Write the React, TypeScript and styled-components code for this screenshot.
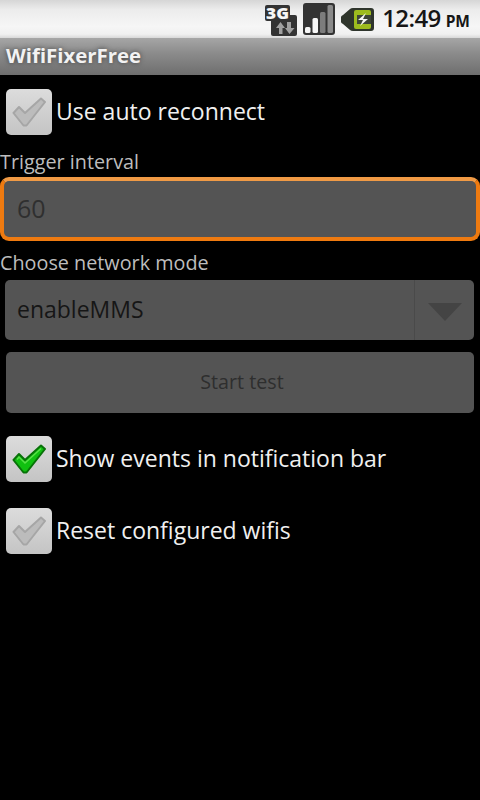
import React from 'react';
import styled, { createGlobalStyle } from 'styled-components';

const GlobalStyle = createGlobalStyle`
  html, body {
    margin: 0;
    padding: 0;
    background: #000;
  }
  * {
    box-sizing: border-box;
  }
`;

const Screen = styled.div`
  width: 480px;
  height: 800px;
  background: #000;
  overflow: hidden;
  font-family: 'Open Sans', 'Noto Sans', sans-serif;
`;

const StatusBar = styled.div`
  height: 38px;
  display: flex;
  justify-content: flex-end;
  align-items: center;
  background: linear-gradient(#d6d6d6 0%, #ececec 25%, #f6f6f6 70%, #f0f0f0 90%, #d8d8d8 100%);
  padding-right: 10px;
`;

const StatusIcon = styled.svg<{ $gap: number; $lift?: number }>`
  display: block;
  margin-right: ${(props) => props.$gap}px;
  margin-bottom: ${(props) => props.$lift || 0}px;
`;

const Clock = styled.div`
  color: #161616;
  font-size: 24px;
  font-weight: 600;
  line-height: 38px;
  letter-spacing: -0.6px;
  white-space: nowrap;
  & small {
    font-size: 15.5px;
    font-weight: 700;
    margin-left: 5px;
    letter-spacing: 0;
  }
`;

const TitleBar = styled.div`
  height: 37px;
  display: flex;
  align-items: center;
  padding: 0 0 4px 6px;
  background: linear-gradient(#a6a6a6 0%, #8c8c8c 40%, #6e6e6e 100%);
  color: #f2f2f2;
  font-size: 20.4px;
  font-weight: 700;
  text-shadow: 0 0 5px #3c3c3c;
`;

const CheckRow = styled.div<{ $top: number; $bottom: number }>`
  display: flex;
  align-items: center;
  padding: ${(props) => props.$top}px 0 ${(props) => props.$bottom}px 6px;
`;

const CheckBox = styled.div`
  width: 46px;
  height: 46px;
  border-radius: 5px;
  display: flex;
  align-items: center;
  justify-content: center;
  background: linear-gradient(#dcdcdc, #c4c4c4);
  & svg {
    display: block;
  }
`;

const CheckLabel = styled.div`
  margin: 0 0 3px 4px;
  color: #f0f0f0;
  font-size: 23px;
  line-height: 32px;
  white-space: nowrap;
`;

const FieldLabel = styled.div<{ $top: number }>`
  margin-top: ${(props) => props.$top}px;
  height: 28px;
  line-height: 28px;
  color: #bdbdbd;
  font-size: 19.8px;
  white-space: nowrap;
`;

const TextField = styled.div`
  margin-top: 1px;
  height: 64px;
  display: flex;
  align-items: center;
  padding: 0 0 2px 13px;
  border: 4px solid #ee7a10;
  border-top-color: #f09a45;
  border-radius: 9px;
  background: #545454;
  color: #2f2f2f;
  font-size: 25px;
`;

const Select = styled.div`
  margin: 3px 6px 0 5px;
  height: 60px;
  display: flex;
  align-items: center;
  justify-content: space-between;
  border-radius: 5px;
  background: #545454;
`;

const SelectValue = styled.div`
  padding: 0 0 3px 12px;
  color: #161616;
  font-size: 23px;
`;

const SelectArrow = styled.div`
  width: 60px;
  height: 60px;
  display: flex;
  align-items: center;
  justify-content: center;
  border-left: 1px solid #4a4a4a;
  &::after {
    content: '';
    width: 0;
    height: 0;
    margin-top: 4px;
    border-left: 17px solid transparent;
    border-right: 17px solid transparent;
    border-top: 18px solid #444;
  }
`;

const TestButton = styled.div`
  margin: 12px 6px 0 6px;
  height: 61px;
  padding: 0 0 3px 4px;
  display: flex;
  align-items: center;
  justify-content: center;
  border-radius: 5px;
  background: #545454;
  color: #2e2e2e;
  font-size: 19.7px;
`;

function Check({ on }: { on?: boolean }) {
  return (
    <svg width="34" height="30" viewBox="0 0 34 30">
      <path
        d="M1.5 16 L7 10 L13 16 L29 1.5 L33 5 L14.5 28.5 L11.5 28.5 Z"
        fill={on ? '#10c010' : '#bcbcbc'}
        stroke={on ? '#087208' : '#a6a6a6'}
        strokeWidth="2"
        strokeLinejoin="round"
      />
      {on && <path d="M5 15.5 L7 13 L13 19 L29 4.5" fill="none" stroke="#58e048" strokeWidth="1.5" />}
    </svg>
  );
}

function NetworkIcon() {
  return (
    <StatusIcon $gap={6} $lift={2} width="32" height="35" viewBox="0 -4 32 35">
      <rect x="0" y="0" width="25" height="16" rx="2" fill="#333" />
      <rect x="6" y="10" width="26" height="21" rx="2" fill="#333" />
      <text
        x="1"
        y="13.5"
        fontFamily="Open Sans, sans-serif"
        fontWeight="800"
        fontSize="16"
        textLength="23"
        lengthAdjust="spacingAndGlyphs"
        fill="#f6f6f6"
      >
        3G
      </text>
      <path d="M14 29 V23 H11 L15.5 17 L20 23 H17.5 V29 Z" fill="#a0a0a0" />
      <path d="M22 17 H26 V23 H29.5 L24.5 29 L20 23 H22 Z" fill="#a0a0a0" />
    </StatusIcon>
  );
}

function SignalIcon() {
  return (
    <StatusIcon $gap={6} width="32" height="32" viewBox="0 0 32 32">
      <rect x="0" y="0" width="32" height="32" rx="3" fill="#333" />
      <rect x="2" y="24" width="5.5" height="6" rx="1.5" fill="#f6f6f6" />
      <rect x="9.5" y="15" width="5.5" height="15" rx="1.5" fill="#f6f6f6" />
      <rect x="17" y="9" width="5.5" height="21" rx="1.5" fill="#7c7c7c" />
      <rect x="24.5" y="2" width="5.5" height="28" rx="1.5" fill="#8a8a8a" />
    </StatusIcon>
  );
}

function BatteryIcon() {
  return (
    <StatusIcon $gap={8} width="33" height="23" viewBox="0 0 33 23">
      <path d="M0 9 Q0 8 2 7 L9 1 Q10 0 12 0 L30 0 Q33 0 33 3 L33 20 Q33 23 30 23 L12 23 Q10 23 9 22 L2 16 Q0 15 0 14 Z" fill="#2f352c" />
      <rect x="13" y="2" width="17" height="19" rx="2" fill="#9dbb1e" />
      <rect x="16" y="7" width="14" height="9" fill="#3d4438" />
      <path d="M25 5 L17 12 H22 L19 18 L27 11 H22 Z" fill="#f6f6f6" />
    </StatusIcon>
  );
}

export default function App() {
  return (
    <Screen>
      <GlobalStyle />
      <StatusBar>
        <NetworkIcon />
        <SignalIcon />
        <BatteryIcon />
        <Clock>
          12:49<small>PM</small>
        </Clock>
      </StatusBar>
      <TitleBar>WifiFixerFree</TitleBar>
      <CheckRow $top={14} $bottom={13}>
        <CheckBox>
          <Check />
        </CheckBox>
        <CheckLabel>Use auto reconnect</CheckLabel>
      </CheckRow>
      <FieldLabel $top={0}>Trigger interval</FieldLabel>
      <TextField>60</TextField>
      <FieldLabel $top={8}>Choose network mode</FieldLabel>
      <Select>
        <SelectValue>enableMMS</SelectValue>
        <SelectArrow />
      </Select>
      <TestButton>Start test</TestButton>
      <CheckRow $top={23} $bottom={0}>
        <CheckBox>
          <Check on />
        </CheckBox>
        <CheckLabel>Show events in notification bar</CheckLabel>
      </CheckRow>
      <CheckRow $top={26} $bottom={0}>
        <CheckBox>
          <Check />
        </CheckBox>
        <CheckLabel>Reset configured wifis</CheckLabel>
      </CheckRow>
    </Screen>
  );
}
